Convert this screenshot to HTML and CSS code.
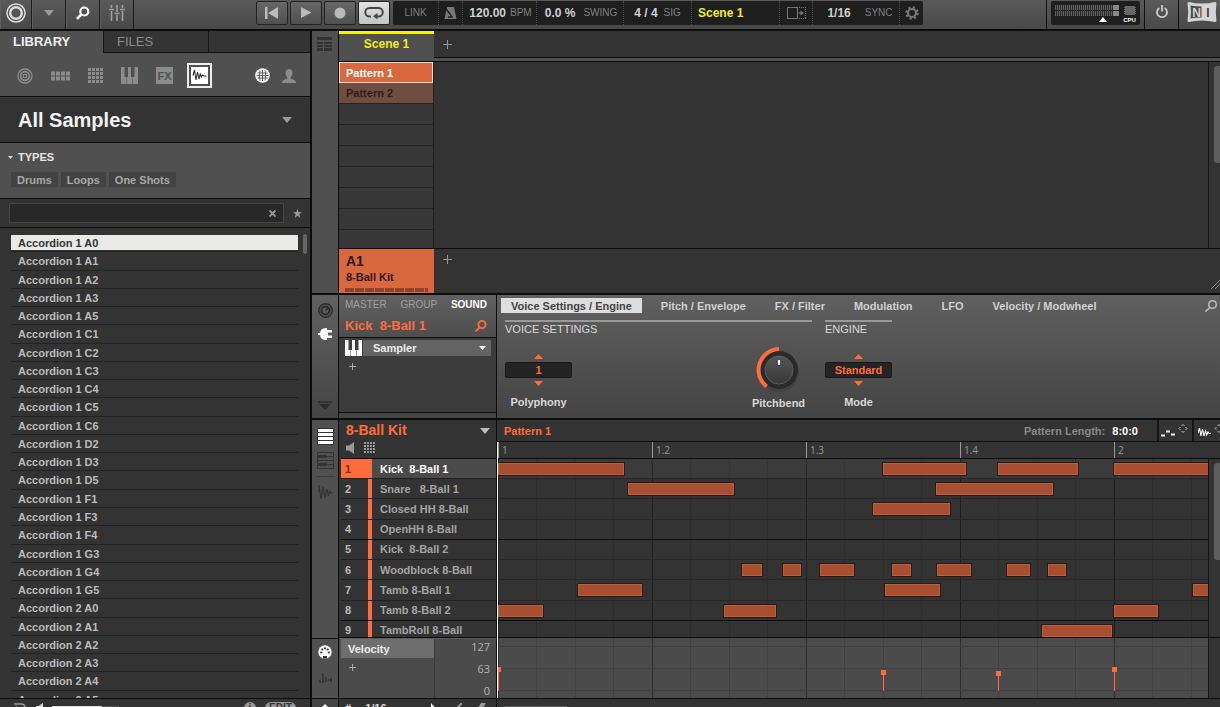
FILE: index.html
```html
<!DOCTYPE html>
<html lang="en">
<head>
  <meta charset="UTF-8">
  <meta name="viewport" content="width=device-width, initial-scale=1.0">
  <title>8-Ball Kit</title>
  <link rel="stylesheet" href="styles.css">
</head>
<body>
<div class="app">
  <header class="topbar">
    <button class="top-cell logo-cell" aria-label="Home">
      <svg width="20" height="20" viewBox="0 0 20 20" fill="none" stroke="#ddd"><circle cx="10" cy="10" r="9" stroke-width="1.5"/><circle cx="10" cy="10" r="5.800" stroke-width="2.400"/><rect x="7.500" y="7.500" width="5" height="5" rx="1" fill="#555" stroke="none"/></svg>
    </button>
    <button class="top-cell" aria-label="Menu"><svg width="10" height="6"><path d="M0 0h10L5 6z" fill="#999"/></svg></button>
    <button class="top-cell" aria-label="Browser">
      <svg width="14" height="14" viewBox="0 0 14 14" fill="none" stroke="#fff"><circle cx="8.300" cy="5.500" r="4" stroke-width="2.200"/><path d="M5.300 8.500L1 12.800" stroke-width="2.600"/></svg>
    </button>
    <button class="top-cell" aria-label="Mixer">
      <svg width="16" height="16" viewBox="0 0 16 16" stroke="#a0a0a0" stroke-width="1.600"><path d="M2.500 0v3M2.500 6v10M8 0v7M8 10v6M13.500 0v3M13.500 6v10M0 4.500h5M5.500 8.500h5M11 4.500h5"/></svg>
    </button>
    <div class="transport">
      <button aria-label="Restart"><svg width="14" height="12"><path d="M0 0h2.500v12H0zM13 0v12L3 6z" fill="#bbb"/></svg></button>
      <button aria-label="Play"><svg width="12" height="12"><path d="M1 0v11l10.500-5.500z" fill="#bbb"/></svg></button>
      <button aria-label="Record"><svg width="12" height="12"><circle cx="6" cy="6" r="5.500" fill="#bbb"/></svg></button>
      <button class="on" aria-label="Loop"><svg width="20" height="14" viewBox="0 0 20 14" fill="none" stroke="#444" stroke-width="2"><path d="M7 10.500H5.500a4 4 0 0 1 0-8.500h9a4 4 0 0 1 0 8.500H12"/><path d="M13.500 7v6.500L9 10.300z" fill="#444" stroke="none"/></svg></button>
    </div>
    <div class="display">
      <div class="seg seg-link"><span class="unit">LINK</span></div>
      <div class="seg seg-icon"><svg width="13" height="13" viewBox="0 0 13 13"><path d="M3 0h7L12.500 12H.5z" fill="#777"/><path d="M1.500 1l6 8M4 10h5" stroke="#1e1e1e" stroke-width="1.300"/></svg></div>
      <div class="seg seg-tempo"><b>120.00</b><span class="unit">BPM</span></div>
      <div class="seg seg-swing"><b>0.0 %</b><span class="unit">SWING</span></div>
      <div class="seg seg-sig"><b>4 / 4</b><span class="unit">SIG</span></div>
      <div class="seg seg-scene"><b class="yellow">Scene 1</b></div>
      <div class="seg seg-follow"><svg width="19" height="12" viewBox="0 0 19 12" fill="none" stroke="#777"><rect x=".5" y=".5" width="10" height="11"/><path d="M12 .5h7M12 11.500h7M18.500 2v9" stroke-dasharray="1 1"/><path d="M11 6h3"/><path d="M13.500 3.500v5L17 6z" fill="#777" stroke="none"/></svg></div>
      <div class="seg seg-sync"><b>1/16</b><span class="unit">SYNC</span></div>
      <div class="seg seg-gear"><svg width="14" height="14" viewBox="-7 -7 14 14" fill="none" stroke="#777"><circle r="4" stroke-width="2.200"/><circle r="5.700" stroke-width="2" stroke-dasharray="2.240 2.240"/></svg></div>
    </div>
    <div class="top-right">
      <div class="meter-cell">
        <div class="meter">
          <div class="meter-bars">
            <div class="meter-bar"></div>
            <div class="meter-bar"></div>
            <svg class="meter-mark" width="8" height="5"><path d="M4 0l4 5H0z" fill="#fff"/></svg>
          </div>
          <div class="cpu">
            <svg width="12" height="11"><path d="M1 1h10v9H1z" fill="#666"/><path d="M0 2.500h12M0 4.500h12M0 6.500h12M0 8.500h12" stroke="#666"/></svg>
            <span>CPU</span>
          </div>
        </div>
      </div>
      <button class="power-cell" aria-label="Engine on"><svg width="14" height="14" viewBox="0 0 14 14" fill="none" stroke="#ccc" stroke-width="1.800"><path d="M4.300 3a5 5 0 1 0 5.400 0M7 0v6.500"/></svg></button>
      <button class="ni-cell" aria-label="Native Instruments">
        <svg width="30" height="22" viewBox="0 0 30 22"><path d="M2 1q13 3 26 0 1.500 0 1.500 1.500-1.500 8.500 0 17 0 1.500-1.500 1.500Q15 18 2 21 .5 21 .5 19.500q1.500-8.500 0-17Q.5 1 2 1z" fill="#d4d4d4"/><path d="M3.500 4.500q5 1 11 1v11q-6 0-11 1 1-6.500 0-13z" fill="#4c4c4c"/><text x="9.500" y="15.500" class="ni-n">N</text><text x="21" y="15.500" class="ni-i">I</text></svg>
      </button>
    </div>
  </header>

  <main class="main">
    <aside class="browser">
      <div class="tabs">
        <button class="tab active">LIBRARY</button>
        <button class="tab">FILES</button>
      </div>
      <div class="kinds">
        <button aria-label="Projects"><svg width="16" height="16" viewBox="0 0 16 16" fill="none" stroke="#8c8c8c"><circle cx="8" cy="8" r="7" stroke-width="1.300"/><circle cx="8" cy="8" r="4.300" stroke-width="1.800"/><rect x="6.500" y="6.500" width="3" height="3"/></svg></button>
        <button aria-label="Groups"><svg width="19" height="10"><path d="M0 2.500h19M0 7.500h19" stroke="#8c8c8c" stroke-width="4" stroke-dasharray="4 1"/></svg></button>
        <button aria-label="Sounds"><svg width="15" height="15"><path d="M0 1.500h15M0 5.500h15M0 9.500h15M0 13.500h15" stroke="#8c8c8c" stroke-width="3" stroke-dasharray="3 1"/></svg></button>
        <button aria-label="Instruments"><svg width="17" height="17" viewBox="0 0 17 17"><path d="M0 0h3.500v10H5v7H0zM7 0h3v10h1.500v7h-6v-7H7zM13.500 0H17v17h-5v-7h1.500z" fill="#8c8c8c"/></svg></button>
        <button aria-label="Effects"><svg width="17" height="17"><path d="M0 0h17v17H0z" fill="#8c8c8c"/><text x="8.500" y="12.500" class="fx">FX</text></svg></button>
        <button class="active" aria-label="Samples"><svg width="17" height="17"><path d="M0 0h17v17H0z" fill="#fff"/><path d="M2 8.500L3.500 3l1.500 10L6.500 5 8 12l1.200-5 1.200 3 1.100-2 1.500 1h2.500" fill="none" stroke="#333" stroke-width="1.100"/></svg></button>
        <span class="spacer"></span>
        <button aria-label="Factory content"><svg width="15" height="15" viewBox="0 0 15 15"><circle cx="7.500" cy="7.500" r="7.300" fill="#fff"/><path d="M2.500 5h10M1.500 7.500h12M2.500 10h10M7.500 2v11M5 2.500Q3.500 7.500 5 12.500M10 2.500q1.500 5 0 10" fill="none" stroke="#505050" stroke-width=".9"/></svg></button>
        <button aria-label="User content"><svg width="14" height="14" viewBox="0 0 14 14" fill="#8c8c8c"><path d="M7 0c2.500 0 3.500 1.800 3.500 4S9 7.500 8.500 8.500c0 2 5.500 1.500 5.500 5.500H0c0-4 5.500-3.500 5.500-5.500C5 7.500 3.500 6.200 3.500 4S4.500 0 7 0z"/></svg></button>
      </div>
      <div class="library">
        <select aria-label="Library"><option>All Samples</option></select>
        <svg class="arrow" width="10" height="6"><path d="M0 0h10L5 6z" fill="#999"/></svg>
      </div>
      <section class="types">
        <h2><svg width="5" height="3"><path d="M0 0h5L2.500 3z" fill="#ddd"/></svg>TYPES</h2>
        <div class="tags">
          <button>Drums</button>
          <button>Loops</button>
          <button>One Shots</button>
        </div>
      </section>
      <div class="search">
        <div class="search-field">
          <input type="text" aria-label="Search samples">
          <button aria-label="Clear"><svg width="7" height="7"><path d="M.5 .5l6 6M6.500 .5l-6 6" stroke="#999" stroke-width="1.800"/></svg></button>
        </div>
        <button aria-label="Favorites"><svg width="9" height="9" viewBox="0 0 10 10"><path d="M5 0l1.300 3.500H10L7 5.900 8.100 10 5 7.500 1.900 10 3 5.900 0 3.500h3.700z" fill="#999"/></svg></button>
      </div>
      <div class="results">
        <ul>
          <li class="selected">Accordion 1 A0</li>
          <li>Accordion 1 A1</li>
          <li>Accordion 1 A2</li>
          <li>Accordion 1 A3</li>
          <li>Accordion 1 A5</li>
          <li>Accordion 1 C1</li>
          <li>Accordion 1 C2</li>
          <li>Accordion 1 C3</li>
          <li>Accordion 1 C4</li>
          <li>Accordion 1 C5</li>
          <li>Accordion 1 C6</li>
          <li>Accordion 1 D2</li>
          <li>Accordion 1 D3</li>
          <li>Accordion 1 D5</li>
          <li>Accordion 1 F1</li>
          <li>Accordion 1 F3</li>
          <li>Accordion 1 F4</li>
          <li>Accordion 1 G3</li>
          <li>Accordion 1 G4</li>
          <li>Accordion 1 G5</li>
          <li>Accordion 2 A0</li>
          <li>Accordion 2 A1</li>
          <li>Accordion 2 A2</li>
          <li>Accordion 2 A3</li>
          <li>Accordion 2 A4</li>
          <li>Accordion 2 A5</li>
        </ul>
        <div class="results-scroll"></div>
      </div>
      <footer class="browser-foot">
        <svg width="14" height="12" viewBox="0 0 14 12" fill="none" stroke="#999" stroke-width="1.500"><path d="M1 2h7q4 0 4 4t-4 4H5M3 4.500L6 8"/></svg>
        <svg width="7" height="10"><path d="M0 3h2.500L7 0v10L2.500 7H0z" fill="#ddd"/></svg>
        <div class="volume"><div></div></div>
        <span class="spacer"></span>
        <span class="info">i</span>
        <button class="edit">EDIT</button>
      </footer>
    </aside>

    <div class="work">
      <section class="arranger">
        <div class="rail">
          <svg width="16" height="14" fill="#333"><path d="M0 0h15v3H0zM0 5h6v2H0zM7 5h8v2H7zM0 8h6v2H0zM7 8h8v2H7zM0 11h6v3H0zM7 11h8v3H7z"/></svg>
        </div>
        <div class="arr-body">
          <div class="scenes">
            <button class="scene">Scene 1</button>
            <div class="scene-rest"><button class="plus" aria-label="Add scene"><svg width="9" height="9"><path d="M0 4.500h9M4.500 0v9" stroke="#999"/></svg></button></div>
          </div>
          <div class="patterns">
            <div class="slots">
              <button class="slot current">Pattern 1</button>
              <button class="slot filled">Pattern 2</button>
              <div class="slot"></div>
              <div class="slot"></div>
              <div class="slot"></div>
              <div class="slot"></div>
              <div class="slot"></div>
              <div class="slot"></div>
              <div class="slot"></div>
            </div>
            <div class="arr-empty"></div>
            <div class="vscroll"><div class="thumb"></div></div>
          </div>
          <div class="groups">
            <button class="group">
              <strong>A1</strong>
              <span>8-Ball Kit</span>
              <i class="pads"></i>
            </button>
            <div class="groups-rest">
              <button class="plus" aria-label="Add group"><svg width="9" height="9"><path d="M0 4.500h9M4.500 0v9" stroke="#999"/></svg></button>
              <svg class="grip" width="9" height="9"><path d="M0 9l9-9M4 9l5-5" stroke="#888"/></svg>
            </div>
          </div>
        </div>
      </section>

      <section class="control">
        <div class="rail">
          <svg width="15" height="15" viewBox="0 0 15 15" fill="none" stroke="#2c2c2c"><circle cx="7.500" cy="7.500" r="6.700" stroke-width="1.400"/><circle cx="7.500" cy="7.500" r="4" stroke-width="2"/><path d="M7.500 7.500l3-3" stroke-width="1.600"/></svg>
          <svg width="14" height="12" viewBox="0 0 14 12" fill="#fff"><path d="M2 6q0-6 6-6h1v2h5v2.500H10v3h4V10H9v2H8Q2 12 2 6zM0 5h3v2H0z"/></svg>
          <span class="spacer"></span>
          <svg width="14" height="9" viewBox="0 0 14 9"><path d="M0 1h14" stroke="#2c2c2c" stroke-width="1.500"/><path d="M1 3h12L7 9z" fill="#2c2c2c"/></svg>
        </div>
        <div class="channel">
          <div class="channel-head">
            <nav>
              <button>MASTER</button>
              <button>GROUP</button>
              <button class="active">SOUND</button>
            </nav>
            <div class="channel-name">
              <span>Kick&nbsp; 8-Ball 1</span>
              <svg width="12" height="12" viewBox="0 0 12 12" fill="none" stroke="#ff6d3c" stroke-width="1.800"><circle cx="7" cy="4.500" r="3.600"/><path d="M4.500 7.500L.5 11.500"/></svg>
            </div>
          </div>
          <div class="plugins">
            <div class="plugin">
              <svg width="17" height="16" viewBox="0 0 17 16"><path d="M0 0h3.500v10H5v6H0zM7 0h3v10h1.500v6h-6v-6H7zM13.500 0H17v16h-5v-6h1.500z" fill="#fff"/></svg>
              <div class="plugin-select">
                <select aria-label="Plug-in"><option>Sampler</option></select>
                <svg class="arrow" width="7" height="4"><path d="M0 0h7L3.500 4z" fill="#eee"/></svg>
              </div>
            </div>
            <button class="plus" aria-label="Add plug-in"><svg width="7" height="7"><path d="M0 3.500h7M3.500 0v7" stroke="#aaa"/></svg></button>
          </div>
        </div>
        <div class="params">
          <nav class="pages">
            <button class="active">Voice Settings / Engine</button>
            <button>Pitch / Envelope</button>
            <button>FX / Filter</button>
            <button>Modulation</button>
            <button>LFO</button>
            <button>Velocity / Modwheel</button>
            <svg width="12" height="12" viewBox="0 0 12 12" fill="none" stroke="#bbb" stroke-width="1.600"><circle cx="7.500" cy="4.500" r="3.800"/><path d="M5 7.500l-4.500 4"/></svg>
          </nav>
          <div class="param-groups">
            <div class="param-group voice">
              <h3>VOICE SETTINGS</h3>
              <div class="param-row">
                <div class="param">
                  <button class="step" aria-label="More voices"><svg width="9" height="5"><path d="M4.500 0L9 5H0z" fill="#ff6d3c"/></svg></button>
                  <input class="value" id="poly" type="text" value="1">
                  <button class="step" aria-label="Fewer voices"><svg width="9" height="5"><path d="M0 0h9L4.500 5z" fill="#ff6d3c"/></svg></button>
                  <label for="poly">Polyphony</label>
                </div>
                <div class="param knob">
                  <svg width="48" height="48" viewBox="0 0 48 48">
                    <defs><linearGradient id="cap" x1="0" y1="0" x2="0" y2="1"><stop offset="0" stop-color="#555"/><stop offset="1" stop-color="#383838"/></linearGradient></defs>
                    <circle cx="24" cy="26" r="20" fill="#3c3c3c" opacity=".6"/>
                    <circle cx="24" cy="24" r="19" fill="#2a2a2a"/>
                    <path d="M11.600 40.500A21 21 0 0 1 24 3" fill="none" stroke="#ff6d3c" stroke-width="4"/>
                    <circle cx="24" cy="24" r="14" fill="url(#cap)" stroke="#5c5c5c"/>
                    <path d="M24 14v5" stroke="#fff" stroke-width="2"/>
                  </svg>
                  <span>Pitchbend</span>
                </div>
              </div>
            </div>
            <div class="param-group engine">
              <h3>ENGINE</h3>
              <div class="param-row">
                <div class="param">
                  <button class="step" aria-label="Previous mode"><svg width="9" height="5"><path d="M4.500 0L9 5H0z" fill="#ff6d3c"/></svg></button>
                  <select class="value" id="mode"><option>Standard</option></select>
                  <button class="step" aria-label="Next mode"><svg width="9" height="5"><path d="M0 0h9L4.500 5z" fill="#ff6d3c"/></svg></button>
                  <label for="mode">Mode</label>
                </div>
              </div>
            </div>
          </div>
        </div>
      </section>

      <section class="editor">
        <div class="rail">
          <svg width="17" height="17"><path d="M.5 .5h16v16H.5z" fill="#fff" stroke="#333"/><path d="M1 4.500h15M1 8.500h15M1 12.500h15" stroke="#333"/></svg>
          <svg width="17" height="17"><path d="M.5 .5h16v16H.5z" fill="none" stroke="#333"/><path d="M1 4.500h15M1 8.500h15M1 12.500h15" stroke="#333"/><path d="M1 3h9v3H1zM1 11h9v3H1z" fill="#333"/></svg>
          <hr>
          <svg width="15" height="16"><path d="M1 8V1l2 14L5 2l2 12L9 5l1.500 6L12 7l1 2h2" fill="none" stroke="#333" stroke-width="1.200"/></svg>
        </div>
        <div class="kit">
          <div class="kit-head">
            <div class="kit-title"><span>8-Ball Kit</span><svg width="10" height="6"><path d="M0 0h10L5 6z" fill="#bbb"/></svg></div>
            <div class="kit-tools">
              <svg width="8" height="12"><path d="M0 3.500h3L8 0v12L3 8.500H0z" fill="#999"/></svg>
              <svg width="12" height="12"><path d="M0 1h12M0 4h12M0 7h12M0 10h12" stroke="#999" stroke-width="2" stroke-dasharray="2 1"/></svg>
            </div>
          </div>
          <div class="tracks">
            <ol>
              <li class="current"><b>1</b><i></i><span>Kick&nbsp; 8-Ball 1</span></li>
              <li><b>2</b><i></i><span>Snare&nbsp;&nbsp; 8-Ball 1</span></li>
              <li><b>3</b><i></i><span>Closed HH 8-Ball</span></li>
              <li class="bank"><b>4</b><i></i><span>OpenHH 8-Ball</span></li>
              <li><b>5</b><i></i><span>Kick&nbsp; 8-Ball 2</span></li>
              <li><b>6</b><i></i><span>Woodblock 8-Ball</span></li>
              <li><b>7</b><i></i><span>Tamb 8-Ball 1</span></li>
              <li class="bank"><b>8</b><i></i><span>Tamb 8-Ball 2</span></li>
              <li><b>9</b><i></i><span>TambRoll 8-Ball</span></li>
            </ol>
          </div>
        </div>
        <div class="roll">
          <div class="roll-head">
            <span class="roll-name">Pattern 1</span>
            <span class="length">Pattern Length: <b>8:0:0</b></span>
            <button class="roll-btn" aria-label="Drag MIDI"><svg width="28" height="15" viewBox="0 0 28 15"><path d="M0 11.500h4M5 7.500h4M10 10.500h4" stroke="#fff" stroke-width="2"/><path d="M20.500 2L22 .5 23.500 2M20.500 7L22 8.500 23.500 7M19.500 3L18 4.500 19.500 6M24.500 3L26 4.500 24.500 6" fill="none" stroke="#bbb"/></svg></button>
            <button class="roll-btn" aria-label="Drag audio"><svg width="28" height="15" viewBox="0 0 28 15"><path d="M0 9l1.500-5L3 12l1.500-7L6 12l1.500-5 1.200 4L10 8l1 1.500h2" fill="none" stroke="#fff" stroke-width="1.100"/><path d="M19.500 2L21 .5 22.500 2M19.500 7L21 8.500 22.500 7M18.500 3L17 4.500 18.500 6M23.500 3L25 4.500 23.500 6" fill="none" stroke="#bbb"/></svg></button>
          </div>
          <div class="ruler">
            <span>1</span><span>1.2</span><span>1.3</span><span>1.4</span><span>2</span>
          </div>
          <div class="grid-row">
            <div class="grid"><div class="lanes" id="lanes"></div></div>
            <div class="vscroll"><div class="thumb"></div></div>
          </div>
        </div>
        <div class="rail rail-velocity">
          <svg width="14" height="14" viewBox="0 0 14 14"><circle cx="7" cy="7" r="6.700" fill="#fff"/><g fill="#333"><circle cx="3.200" cy="7.500" r="1.100"/><circle cx="10.800" cy="7.500" r="1.100"/><circle cx="4.300" cy="4.500" r="1.100"/><circle cx="9.700" cy="4.500" r="1.100"/><circle cx="7" cy="3.300" r="1.100"/><path d="M5 11h4v2.500H5z"/></g></svg>
          <svg width="13" height="12"><path d="M1 8v3M4 1v10M7 5v5M9.500 7v2M12 6v4" stroke="#333" stroke-width="1.600"/></svg>
        </div>
        <div class="velocity-head">
          <div class="lane-names">
            <button class="lane-name">Velocity</button>
            <button class="plus" aria-label="Add lane"><svg width="7" height="7"><path d="M0 3.500h7M3.500 0v7" stroke="#aaa"/></svg></button>
          </div>
          <div class="scale"><span>127</span><span>63</span><span>0</span></div>
        </div>
        <div class="velocity-row">
          <div class="velocity" id="velocity"></div>
          <div class="velocity-end"></div>
        </div>
        <div class="playhead"></div>
      </section>

      <footer class="editor-foot">
        <div class="foot-rail"><svg width="12" height="12"><path d="M6 0l6 6H9v6H3V6H0z" fill="#fff"/></svg></div>
        <div class="foot-tools">
          <span>#</span>
          <span>1/16</span>
          <svg width="8" height="12"><path d="M0 0l7 8H3l-3 3z" fill="#fff"/></svg>
          <svg width="9" height="10"><path d="M9 0L0 9" stroke="#999" stroke-width="2"/></svg>
          <svg width="10" height="10"><path d="M5 0h5L5 8H0z" fill="#999"/></svg>
        </div>
        <div class="foot-scroll"><div></div></div>
      </footer>
    </div>
  </main>
</div>

<script>
  // [start, length] for every note, one list per sound
  const notes = [
    [[0, 126], [385, 83], [500, 80], [616, 110]],
    [[130, 106], [438, 117]],
    [[375, 77]],
    [],
    [],
    [[244, 20], [285, 18], [322, 34], [394, 19], [439, 34], [509, 23], [550, 18]],
    [[80, 64], [387, 55], [695, 40]],
    [[0, 45], [226, 52], [616, 44]],
    [[544, 70]]
  ];
  // [start, height] of the velocity handles
  const hits = [[0, 24], [385, 21], [500, 20], [616, 24]];

  const lanes = document.getElementById('lanes');
  notes.forEach((list, i) => {
    const lane = document.createElement('div');
    lane.className = 'lane' + (i === 0 ? ' current' : '') + (i % 4 === 3 ? ' bank' : '');
    list.forEach(([start, length]) => {
      const note = document.createElement('div');
      note.className = 'note';
      note.style.left = start + 'px';
      note.style.width = length + 'px';
      lane.appendChild(note);
    });
    lanes.appendChild(lane);
  });

  const velocity = document.getElementById('velocity');
  hits.forEach(([start, height]) => {
    const hit = document.createElement('div');
    hit.className = 'hit';
    hit.style.left = start + 'px';
    hit.style.height = height + 'px';
    velocity.appendChild(hit);
  });
</script>
</body>
</html>
```

FILE: styles.css
```css
* { margin: 0; padding: 0; box-sizing: border-box; }
body {
  height: 100vh;
  overflow: hidden;
  background: #333;
  color: #bcbcbc;
  font-family: "Liberation Sans", Arial, sans-serif;
  font-size: 11px;
  font-weight: bold;
  line-height: 14px;
}
button, select, input {
  background: none;
  border: none;
  border-radius: 0;
  color: inherit;
  font: inherit;
  outline: none;
  appearance: none;
}
button { display: block; cursor: pointer; }
svg { display: block; flex: none; }
ul, ol { list-style: none; }
.spacer { flex: 1; }
/* the footers run a little below the window */
.app {
  height: calc(100vh + 10px);
  display: flex;
  flex-direction: column;
}

/* top bar */
.topbar {
  height: 31px;
  flex: none;
  display: flex;
  background: linear-gradient(#5a5a5a, #484848);
  border-bottom: 2px solid #0c0c0c;
}
.top-cell {
  width: 34px;
  display: flex;
  align-items: center;
  justify-content: center;
  padding-bottom: 4px;
  border-right: 1px solid #1c1c1c;
  box-shadow: inset 1px 0 #5f5f5f;
}
.logo-cell { width: 32px; }
.transport {
  display: flex;
  gap: 2px;
  margin-left: 122px;
  padding-top: 1px;
}
.transport button {
  width: 32px;
  height: 24px;
  display: flex;
  align-items: center;
  justify-content: center;
  border: 1px solid #222;
  border-radius: 2px;
  background: linear-gradient(#676767, #505050);
}
.transport .on { background: linear-gradient(#e2e2e2, #c4c4c4); }
.display {
  height: 24px;
  display: flex;
  margin: 1px 0 0 3px;
  border-radius: 2px;
  background: #1e1e1e;
}
.seg {
  display: flex;
  align-items: center;
  justify-content: center;
  gap: 4px;
  border-right: 1px dotted #4c4c4c;
}
.seg:last-child { border-right: none; }
.seg b { font-size: 12px; color: #d0d0d0; }
.seg .yellow { color: #f0ee1c; }
.unit { font-size: 10px; font-weight: normal; color: #808080; }
.seg-link { width: 46px; }
.seg-icon { width: 24px; }
.seg-tempo { width: 74px; padding-left: 2px; }
.seg-swing { width: 87px; gap: 8px; padding-left: 2px; }
.seg-sig { width: 68px; gap: 6px; }
.seg-scene { width: 88px; justify-content: flex-start; padding-left: 6px; }
.seg-follow { width: 33px; }
.seg-sync { width: 87px; gap: 14px; padding-left: 8px; }
.seg-gear { width: 23px; }
.top-right {
  display: flex;
  margin-left: auto;
}
.meter-cell {
  padding: 1px 4px 0;
  border-left: 1px solid #111;
  border-right: 1px solid #111;
}
.meter {
  height: 24px;
  display: flex;
  gap: 4px;
  padding: 4px 4px 0;
  border-radius: 2px;
  background: #1e1e1e;
}
.meter-bars { width: 64px; }
.meter-bar {
  height: 5px;
  margin-bottom: 1px;
  background:
    linear-gradient(90deg, transparent 58px, #888 58px),
    repeating-linear-gradient(90deg, #606060 0 1px, #2c2c2c 1px 2px);
}
.meter-mark { margin-left: 44px; }
.cpu {
  width: 13px;
  display: flex;
  flex-direction: column;
  align-items: center;
}
.cpu span { font-size: 6px; line-height: 8px; color: #fff; }
.power-cell, .ni-cell {
  display: flex;
  justify-content: center;
  align-items: center;
  padding-bottom: 5px;
}
.power-cell { width: 34px; border-right: 1px solid #111; }
.ni-cell { width: 41px; padding-left: 4px; }
.ni-n, .ni-i { font-size: 12px; text-anchor: middle; fill: #d4d4d4; }
.ni-i { fill: #444; }

.main {
  flex: 1;
  min-height: 0;
  display: flex;
}

/* library browser */
.browser {
  width: 312px;
  flex: none;
  display: flex;
  flex-direction: column;
  border-right: 2px solid #0c0c0c;
}
.tabs {
  height: 22px;
  flex: none;
  display: flex;
  background: linear-gradient(#343434 21px, #111 21px);
}
.tab {
  width: 105px;
  padding: 0 13px;
  font-size: 13px;
  font-weight: normal;
  text-align: left;
  color: #8a8a8a;
  border-right: 1px solid #161616;
}
.tab.active {
  width: 104px;
  font-weight: bold;
  color: #f0f0f0;
  background: #505050;
}
.kinds {
  height: 44px;
  flex: none;
  display: flex;
  align-items: center;
  gap: 18px;
  padding: 2px 14px 0 17px;
  background: #505050;
  border-bottom: 1px solid #0c0c0c;
}
.kinds .active {
  margin: 0 -4px;
  padding: 2px;
  border: 2px solid #eee;
}
.kinds .spacer { margin-right: -36px; }
.kinds button:last-child { margin-left: -6px; }
.fx { font-size: 11px; text-anchor: middle; fill: #505050; }
.library {
  height: 46px;
  flex: none;
  position: relative;
  background: #333;
  border-bottom: 1px solid #0c0c0c;
  border-top: 1px solid #3c3c3c;
}
.library select {
  width: 100%;
  height: 100%;
  padding: 0 18px;
  font-size: 20px;
  line-height: 28px;
  color: #f4f4f4;
}
.library .arrow { position: absolute; right: 18px; top: 19px; }
.types {
  height: 56px;
  flex: none;
  padding: 7px 11px;
  background: #505050;
  border-bottom: 1px solid #0c0c0c;
}
.types h2 {
  display: flex;
  align-items: center;
  gap: 5px;
  margin-left: -3px;
  font-size: 11px;
  color: #e4e4e4;
}
.tags {
  display: flex;
  gap: 3px;
  margin-top: 8px;
}
.tags button {
  height: 15px;
  padding: 0 6px;
  color: #a8a8a8;
  background: #424242;
}
.search {
  height: 29px;
  flex: none;
  display: flex;
  align-items: center;
  gap: 9px;
  padding: 0 8px 0 9px;
  border-bottom: 1px solid #0c0c0c;
}
.search-field {
  flex: 1;
  height: 20px;
  display: flex;
  align-items: center;
  padding: 0 7px;
  border: 1px solid #454545;
  background: #282828;
}
.search-field input { flex: 1; }
.results {
  flex: 1;
  min-height: 0;
  overflow: hidden;
  display: flex;
  gap: 5px;
  padding: 6px 3px 0 11px;
}
.results ul {
  flex: 1;
  height: calc(100% + 11px);
  display: flex;
  flex-direction: column;
}
.results li {
  flex: 1;
  padding: 2px 7px 0;
  border-bottom: 1px solid #232323;
}
.results .selected {
  color: #333;
  background: linear-gradient(#333 1px, #e9e9e7 1px 16px, #333 16px);
}
.results-scroll {
  width: 4px;
  height: 20px;
  background: #666;
  border-radius: 2px;
}
.browser-foot {
  height: 19px;
  flex: none;
  display: flex;
  align-items: center;
  gap: 9px;
  padding: 0 14px 0 13px;
  border-top: 1px solid #0c0c0c;
}
.volume { width: 67px; height: 4px; background: #555; }
.volume div { width: 50px; height: 4px; background: #ddd; }
.info, .edit {
  height: 12px;
  line-height: 12px;
  font-size: 10px;
  text-align: center;
  color: #333;
  background: #999;
  border-radius: 6px;
}
.info { width: 12px; }
.edit { width: 31px; }

/* right side */
.work {
  flex: 1;
  min-width: 0;
  display: flex;
  flex-direction: column;
}
.rail {
  width: 27px;
  flex: none;
  display: flex;
  flex-direction: column;
  align-items: center;
  background: #505050;
  border-right: 1px solid #0c0c0c;
}
.plus { align-self: flex-start; }
.vscroll {
  width: 12px;
  flex: none;
  padding: 4px 0 0 5px;
  border-left: 1px solid #141414;
  background: #333;
}
.thumb {
  height: 97px;
  background: #5e5e5e;
  border-radius: 3px 0 0 3px;
}

/* arranger */
.arranger {
  height: 264px;
  flex: none;
  display: flex;
  border-bottom: 2px solid #0c0c0c;
}
.arranger .rail { padding-top: 6px; }
.arr-body {
  flex: 1;
  min-width: 0;
  display: flex;
  flex-direction: column;
}
.scenes {
  height: 31px;
  flex: none;
  display: flex;
  align-items: flex-start;
  background: #505050;
  border-bottom: 1px solid #0c0c0c;
}
.scene {
  width: 95px;
  height: 26px;
  padding-bottom: 4px;
  font-size: 12px;
  color: #f0ee1c;
  border-top: 3px solid #f8f400;
}
.scene-rest, .groups-rest {
  flex: 1;
  display: flex;
  justify-content: space-between;
  background: #333;
}
.scene-rest {
  height: 27px;
  padding: 9px 9px 0;
  border-bottom: 1px solid #0c0c0c;
}
.patterns { flex: 1; min-height: 0; display: flex; }
.slots {
  width: 95px;
  overflow: hidden;
  background: #373737;
  border-right: 1px solid #222;
}
.slot {
  width: 94px;
  height: 21px;
  text-align: left;
  padding-left: 7px;
  border-bottom: 1px solid #232323;
}
.slot:last-child { border-bottom: none; }
.slot.current {
  padding-left: 6px;
  color: #fff;
  background: #d9683f;
  border: 1px solid #f2d9cf;
}
.slot.filled { color: #301d17; background: #704d41; }
.arr-empty { flex: 1; }
.groups {
  height: 45px;
  flex: none;
  display: flex;
  border-top: 1px solid #0c0c0c;
}
.group {
  width: 95px;
  padding: 2px 7px 0;
  text-align: left;
  color: #301711;
  background: #d9683f;
}
.group strong { display: block; font-size: 14px; line-height: 17px; }
.group span { display: block; line-height: 14px; }
.pads {
  display: block;
  height: 4px;
  margin: 4px -1px 0;
  background: repeating-linear-gradient(90deg, #8a4530 0 9px, transparent 9px 10px);
}
.groups-rest { padding: 6px 0 0 9px; }
.grip { align-self: flex-end; margin-bottom: 4px; }

/* control area */
.control {
  height: 125px;
  flex: none;
  display: flex;
  border-bottom: 2px solid #0c0c0c;
}
.control .rail {
  gap: 10px;
  padding: 8px 0;
  background: linear-gradient(#616161, #454545);
}
.channel {
  width: 158px;
  flex: none;
  display: flex;
  flex-direction: column;
  padding-bottom: 5px;
  background: #454545;
  border-right: 1px solid #0c0c0c;
}
.channel-head {
  height: 43px;
  flex: none;
  padding: 3px 9px 0 6px;
  background: linear-gradient(#616161, #4e4e4e);
  border-bottom: 1px solid #0c0c0c;
}
.channel-head nav { display: flex; justify-content: space-between; }
.channel-head nav button { font-size: 10px; font-weight: normal; color: #a0a0a0; }
.channel-head nav .active { font-weight: bold; color: #fff; }
.channel-name {
  display: flex;
  align-items: center;
  justify-content: space-between;
  padding-top: 7px;
  font-size: 13px;
  color: #ff6d3c;
}
.plugins {
  flex: 1;
  padding: 2px 5px 0 6px;
  background: #3c3c3c;
  border-bottom: 1px solid #0c0c0c;
}
.plugin { display: flex; gap: 1px; }
.plugin-select { flex: 1; position: relative; }
.plugin-select select {
  width: 100%;
  height: 16px;
  padding: 0 10px;
  color: #eee;
  background: #646464;
}
.plugin-select .arrow { position: absolute; right: 5px; top: 6px; }
.plugins .plus { margin: 7px 4px; }
.params {
  flex: 1;
  min-width: 0;
  padding: 3px 3px 0 4px;
  background: linear-gradient(#606060, #444);
}
.pages {
  display: flex;
  align-items: center;
  gap: 9px;
}
.pages button { height: 15px; padding: 0 10px; color: #d0d0d0; white-space: nowrap; }
.pages .active { color: #444; background: #dedede; }
.pages svg { margin-left: auto; }
.param-groups {
  display: flex;
  gap: 13px;
  padding: 7px 0 0 4px;
}
.param-group { border-top: 2px solid #999; }
.param-group h3 {
  height: 14px;
  font-size: 11px;
  font-weight: normal;
  color: #d8d8d8;
}
.voice { width: 307px; }
.engine { width: 67px; }
.param-row { display: flex; justify-content: space-between; }
.param {
  width: 67px;
  display: flex;
  flex-direction: column;
  align-items: center;
  padding-top: 18px;
  color: #d8d8d8;
}
.param.knob { padding-top: 10px; }
.param label { padding-top: 9px; }
.knob span { padding-top: 2px; }
.value {
  width: 67px;
  height: 16px;
  margin: 3px 0;
  text-align: center;
  text-align-last: center;
  color: #ff6d3c;
  background: #242424;
  border: 1px solid #1a1a1a;
  border-radius: 2px;
}

/* pattern editor */
.editor {
  flex: 1;
  min-height: 0;
  position: relative;
  display: grid;
  grid-template-columns: 27px 158px 1fr;
  grid-template-rows: 1fr 60px;
}
.editor .rail { gap: 7px; padding-top: 8px; }
.editor .rail hr { width: 19px; border: none; border-top: 1px solid #3c3c3c; }
.editor .rail-velocity { gap: 13px; padding-top: 6px; border-top: 1px solid #0c0c0c; }
.kit, .roll {
  min-width: 0;
  min-height: 0;
  display: flex;
  flex-direction: column;
  border-bottom: 1px solid #0c0c0c;
}
.kit { padding-left: 2px; border-right: 1px solid #0c0c0c; }
.kit-head {
  height: 39px;
  flex: none;
  padding: 2px 6px 0 5px;
  border-bottom: 1px solid #0c0c0c;
}
.kit-title {
  display: flex;
  align-items: center;
  justify-content: space-between;
  font-size: 14px;
  line-height: 17px;
  color: #ff6d3c;
}
.kit-tools { display: flex; gap: 10px; padding-top: 3px; }
.tracks { flex: 1; min-height: 0; overflow: hidden; }
.tracks ol, .lanes {
  height: calc(100% + 4px);
  display: flex;
  flex-direction: column;
}
.tracks li {
  flex: 1;
  display: flex;
  align-items: center;
  border-bottom: 1px solid #202020;
}
.tracks b { width: 27px; padding-left: 4px; }
.tracks i { width: 4px; align-self: stretch; background: #ff6d3c; }
.tracks span { padding-left: 8px; color: #a4a4a4; }
.tracks .current { background: linear-gradient(90deg, #ff6d3c 31px, #4a4a4a 31px); }
.tracks .current b { color: #7a2f15; }
.tracks .current span { color: #fff; }
.tracks .bank, .lane.bank { border-color: #0c0c0c; }
.roll-head {
  height: 22px;
  flex: none;
  display: flex;
  align-items: center;
  padding-left: 7px;
  border-bottom: 1px solid #0c0c0c;
}
.roll-name { color: #ff6d3c; }
.length { margin: 0 19px 0 auto; color: #888; }
.length b { margin-left: 4px; color: #fff; }
.roll-btn {
  width: 35px;
  height: 21px;
  padding: 2px 0 0 2px;
  overflow: hidden;
  border-left: 2px solid #161616;
}
.roll-btn:last-child { width: 28px; padding-left: 4px; }
.ruler {
  height: 17px;
  flex: none;
  display: flex;
  overflow: hidden;
  padding-left: 1px;
  border-bottom: 1px solid #0c0c0c;
}
.ruler span {
  width: 154px;
  flex: none;
  padding-left: 3px;
  font-family: "Open Sans", sans-serif;
  font-size: 10px;
  line-height: 16px;
  font-weight: normal;
  color: #999;
  border-left: 1px solid #999;
}
.grid-row, .velocity-row { flex: 1; min-height: 0; display: flex; }
.grid, .velocity {
  flex: 1;
  position: relative;
  overflow: hidden;
  margin-left: 1px;
  background-image: linear-gradient(90deg, #1e1e1e 1px, transparent 1px 38px, #2d2d2d 38px 39px, transparent 39px 77px, #2d2d2d 77px 78px, transparent 78px 115px, #2d2d2d 115px 116px, transparent 116px);
  background-size: 154px 100%;
}
.lane {
  flex: 1;
  position: relative;
  border-bottom: 1px solid #272727;
}
.lane.current { background: rgba(255, 255, 255, .04); }
.note {
  position: absolute;
  top: 4px;
  height: 12px;
  background: #a74f30;
  border: 1px solid #c05d3a;
  outline: 1px solid #251c19;
}
.velocity-head {
  display: flex;
  padding-left: 2px;
  background: #4b4b4b;
  border-top: 1px solid #5a5a5a;
  border-right: 1px solid #0c0c0c;
}
.lane-names { width: 94px; border-right: 1px solid #3a3a3a; }
.lane-name {
  width: 100%;
  height: 19px;
  padding-left: 7px;
  text-align: left;
  color: #eee;
  background: #6e6e6e;
}
.lane-names .plus { margin: 6px 8px; }
.scale {
  flex: 1;
  display: flex;
  flex-direction: column;
  justify-content: space-between;
  padding: 1px 6px 0 0;
  text-align: right;
  font-family: "Open Sans", sans-serif;
  font-weight: normal;
  color: #b4b4b4;
}
.velocity-row { background: #333; }
.velocity {
  background-color: #4b4b4b;
  background-image:
    linear-gradient(transparent 8px, #404040 8px 9px, transparent 9px 30px, #404040 30px 31px, transparent 31px 52px, #404040 52px 53px, transparent 53px),
    linear-gradient(90deg, #2c2c2c 1px, transparent 1px 38px, #414141 38px 39px, transparent 39px 77px, #414141 77px 78px, transparent 78px 115px, #414141 115px 116px, transparent 116px);
  background-size: 100% 100%, 154px 100%;
}
.velocity-end { width: 12px; border-left: 1px solid #141414; }
.hit {
  position: absolute;
  bottom: 7px;
  width: 1px;
  background: #ff6d3c;
}
.hit::before {
  content: "";
  position: absolute;
  left: -2px;
  top: 0;
  width: 5px;
  height: 5px;
  background: #ff6d3c;
}
.playhead {
  position: absolute;
  left: 185px;
  top: 22px;
  bottom: 0;
  width: 1px;
  background: #fff;
}
.editor-foot {
  height: 19px;
  flex: none;
  display: flex;
  border-top: 1px solid #0c0c0c;
}
.foot-rail {
  width: 27px;
  padding: 5px 7px;
  background: #444;
  border-right: 1px solid #0c0c0c;
}
.foot-tools {
  width: 158px;
  display: flex;
  gap: 14px;
  padding: 2px 6px;
  color: #ddd;
  border-right: 1px solid #0c0c0c;
}
.foot-tools svg { margin-top: 2px; }
.foot-tools span + svg { margin-left: 30px; }
.foot-scroll { flex: 1; padding: 7px 5px; }
.foot-scroll div { width: 66px; height: 7px; background: #5e5e5e; border-radius: 3px; }
```
